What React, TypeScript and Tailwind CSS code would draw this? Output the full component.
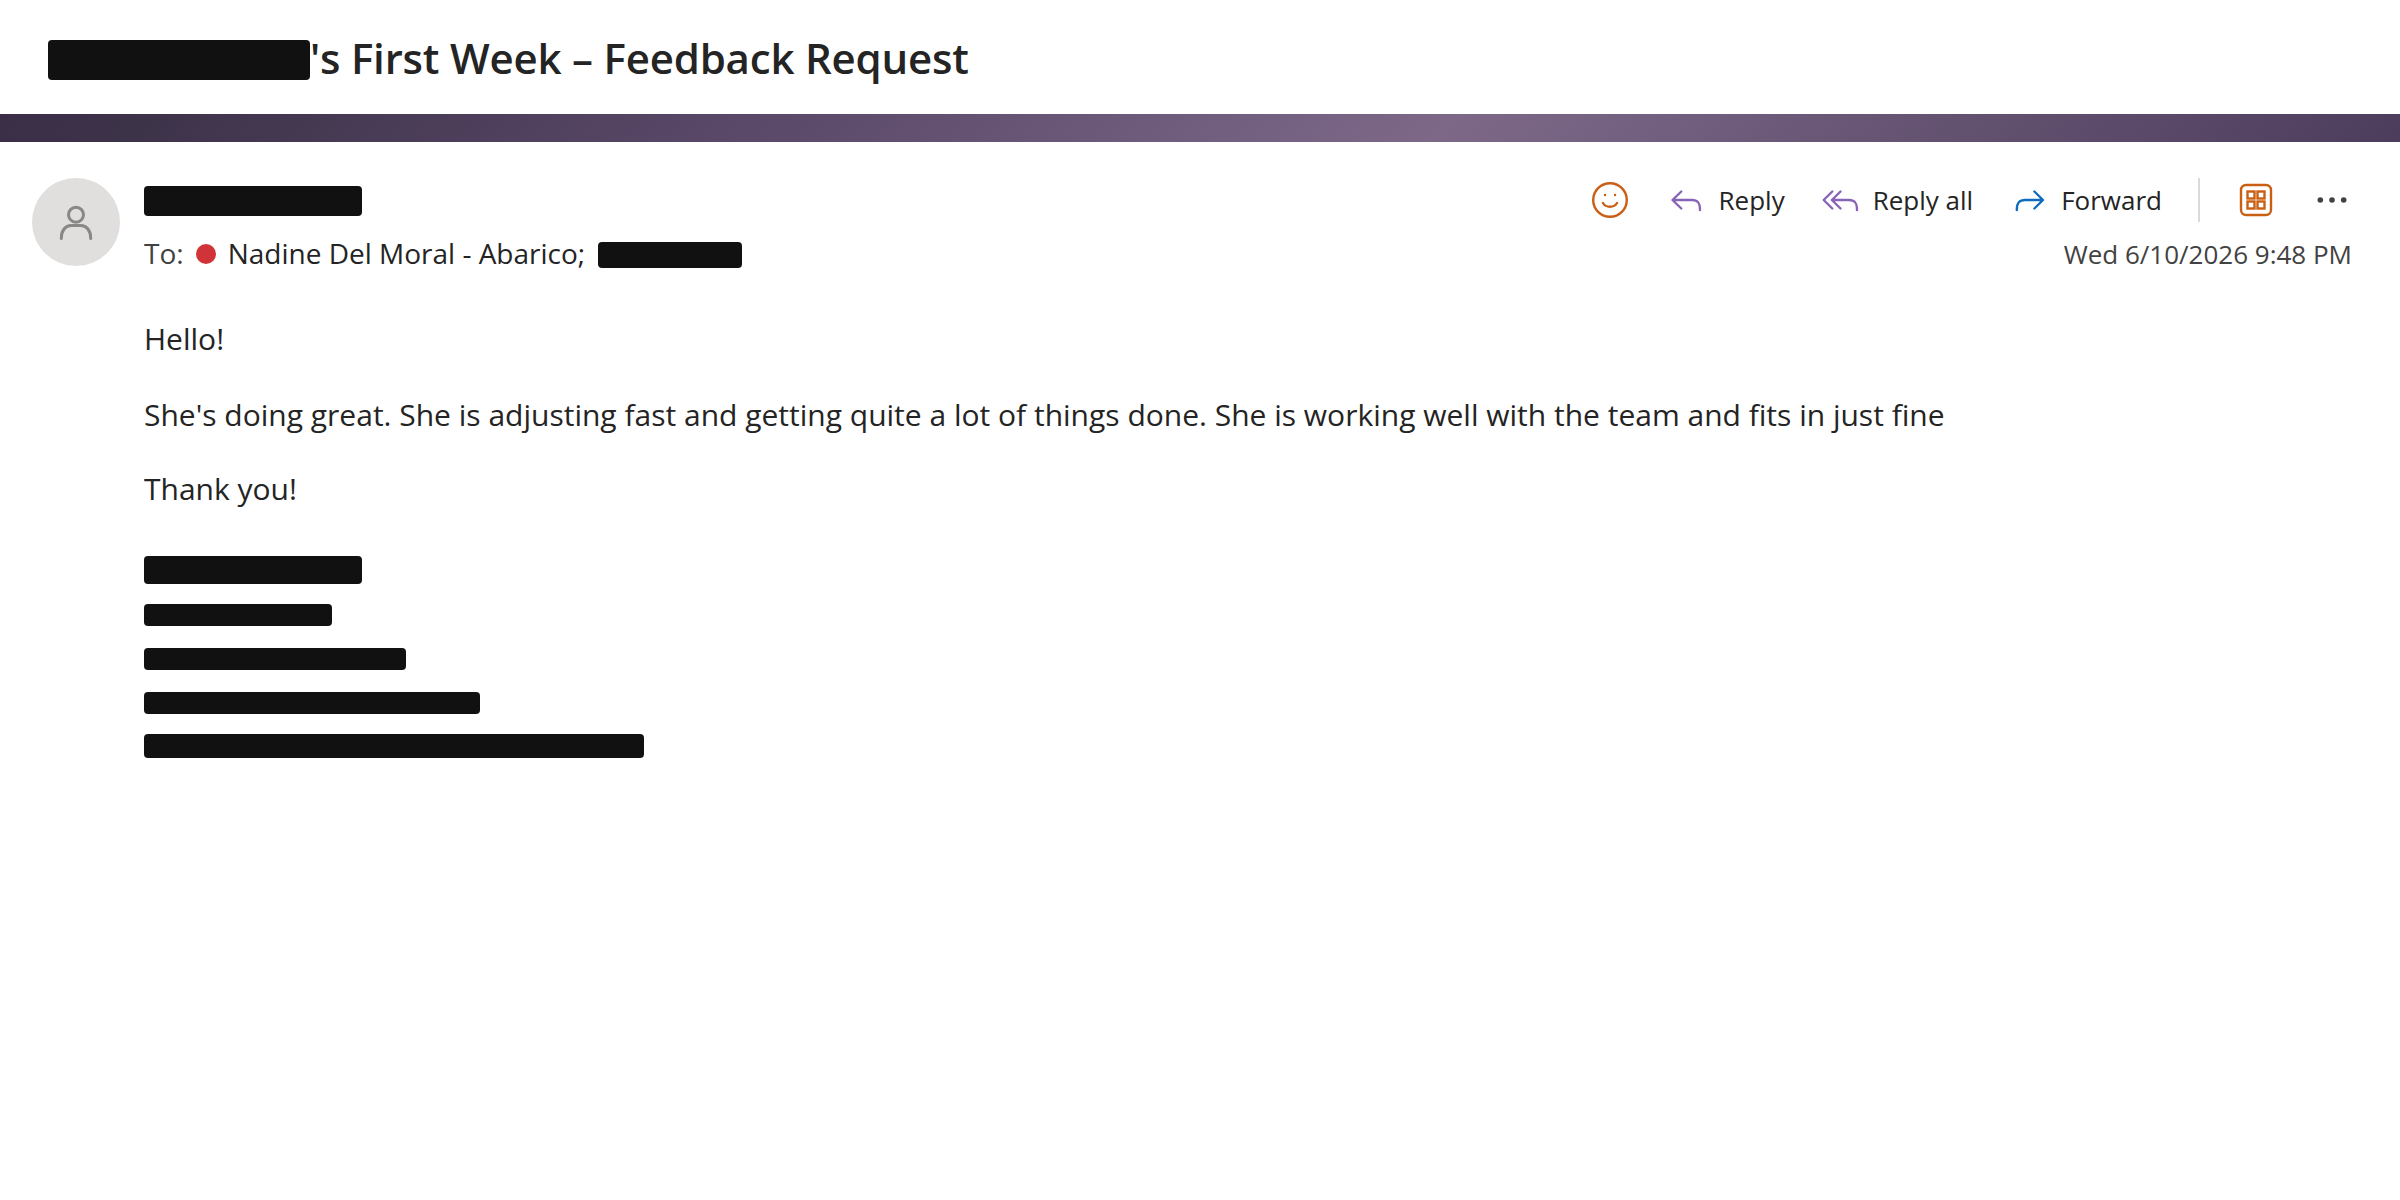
import type { ReactNode } from "react";

function Redacted({ className }: { className: string }) {
  return <div className={`shrink-0 rounded bg-[#111111] ${className}`} />;
}

function Icon({ className, children }: { className: string; children: ReactNode }) {
  return (
    <svg
      viewBox="0 0 40 40"
      fill="none"
      stroke="currentColor"
      strokeWidth="2.4"
      strokeLinecap="round"
      strokeLinejoin="round"
      className={`size-10 shrink-0 ${className}`}
    >
      {children}
    </svg>
  );
}

function Action({ className, label, children }: { className: string; label: string; children: ReactNode }) {
  return (
    <button className={`flex items-center gap-3 whitespace-nowrap text-[26px] leading-10 ${className}`}>
      {children}
      {label}
    </button>
  );
}

export default function App() {
  return (
    <div className="flex h-[1200px] w-[2400px] flex-col overflow-hidden bg-white font-['Open_Sans',sans-serif] text-[#242424]">
      <header className="flex h-[114px] items-start px-12 pt-[30px]">
        <Redacted className="mt-[10px] h-10 w-[262px]" />
        <h1 className="whitespace-nowrap text-[42px] font-semibold leading-[56px] tracking-[-0.2px]">'s First Week – Feedback Request</h1>
      </header>
      <div className="h-7 bg-[linear-gradient(135deg,#3b2d47_0%,#3d3349_6%,#5c4a6b_33%,#7d6888_60%,#4d3d5c_100%)]" />

      <main className="flex gap-6 pl-8 pr-12 pt-9">
        <div className="flex size-[88px] shrink-0 items-center justify-center rounded-full bg-[#e1dfdd]">
          <svg viewBox="0 0 36 36" fill="none" stroke="#8a8886" strokeWidth="3" strokeLinecap="round" className="size-9">
            <circle cx="18" cy="10.7" r="7.5" />
            <path d="M3.300 34.500c0-8 4-13 10-13h9.400c6 0 10 5 10 13" />
          </svg>
        </div>

        <div className="flex grow flex-col">
          <div className="flex h-11 items-center justify-between">
            <Redacted className="mt-[2px] h-[30px] w-[218px]" />
            <div className="flex items-center">
              <Icon className="text-[#ca5f14]">
                <circle cx="20" cy="20" r="16.800" />
                <path d="M13 23c3 5 11 5 14 0" />
                <path d="M15 15h.01M25 15h.01" />
              </Icon>
              <Action className="ml-[37px]" label="Reply">
                <Icon className="text-[#8764b8]">
                  <path d="M14.300 11.500l-8.800 8.500 8.800 8.500M6 20h19c6 0 8 3 8 10" />
                </Icon>
              </Action>
              <Action className="ml-9" label="Reply all">
                <Icon className="text-[#8764b8]">
                  <path d="M11.300 11.500l-8.600 8.500 8.600 8.500M19.500 11.500l-8.600 8.500 8.600 8.500M11 20h17c6 0 8 3 8 10" />
                </Icon>
              </Action>
              <Action className="ml-9" label="Forward">
                <Icon className="text-[#0f6cbd]">
                  <path d="M25.400 11.500l8.600 8.500-8.600 8.500M33.500 20H16c-6 0-8.200 3-8.200 10" />
                </Icon>
              </Action>
              <div className="ml-9 h-11 w-0.5 bg-[#dadada]" />
              <Icon className="ml-9 text-[#ca5f14]">
                <rect x="5" y="5" width="30" height="30" rx="5" />
                <g strokeLinejoin="miter">
                  <rect x="11.500" y="11.500" width="7" height="7" />
                  <rect x="21.500" y="11.500" width="7" height="7" />
                  <rect x="11.500" y="21.500" width="7" height="7" />
                  <rect x="21.500" y="21.500" width="7" height="7" />
                </g>
              </Icon>
              <Icon className="ml-9 text-[#424242]">
                <g fill="currentColor" stroke="none">
                  <circle cx="8.300" cy="20" r="2.800" />
                  <circle cx="20" cy="20" r="2.800" />
                  <circle cx="31.700" cy="20" r="2.800" />
                </g>
              </Icon>
            </div>
          </div>
          <div className="flex h-16 items-center justify-between">
            <div className="flex h-10 items-center gap-3 whitespace-nowrap text-[28px] leading-[38px]">
              <span className="mb-[2px] text-[#424242]">To:</span>
              <span className="size-5 rounded-full bg-[#d13438]" />
              <span className="mb-[2px]">Nadine Del Moral - Abarico;</span>
              <Redacted className="ml-px mt-[2px] h-[26px] w-[144px]" />
            </div>
            <time className="whitespace-nowrap text-[26px] leading-10 text-[#424242]">Wed 6/10/2026 9:48 PM</time>
          </div>
          <div className="whitespace-nowrap pt-[30px] text-[30px] leading-[45px]">
            <p>Hello!</p>
            <p className="mt-[31px]">
              She's doing great. She is adjusting fast and getting quite a lot of things done. She is working well with the team and fits in just fine
            </p>
            <p className="mt-[29px]">Thank you!</p>
          </div>
          <div className="flex flex-col gap-[22px] pt-[45px]">
            <Redacted className="-mb-[2px] h-7 w-[218px]" />
            <Redacted className="h-[22px] w-[188px]" />
            <Redacted className="h-[22px] w-[262px]" />
            <Redacted className="-mb-[2px] h-[22px] w-[336px]" />
            <Redacted className="h-6 w-[500px]" />
          </div>
        </div>
      </main>
    </div>
  );
}
